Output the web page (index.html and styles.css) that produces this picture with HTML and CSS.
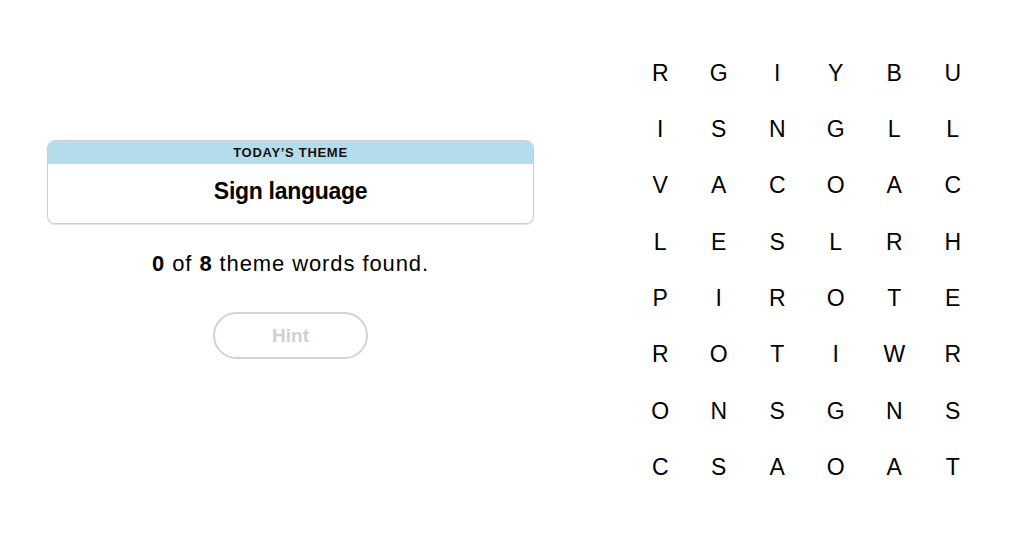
FILE: index.html
```html
<!DOCTYPE html>
<html lang="en">
<head>
<meta charset="utf-8">
<title>Strands</title>
<link rel="stylesheet" href="styles.css">
</head>
<body>
<main class="page">
  <section class="side">
    <div class="theme">
      <div class="theme-head">TODAY’S THEME</div>
      <div class="theme-body">Sign language</div>
    </div>
    <p class="found"><b>0</b> of <b>8</b> theme words found.</p>
    <button class="hint" disabled>Hint</button>
  </section>
  <section class="board">
    <span>R</span><span>G</span><span>I</span><span>Y</span><span>B</span><span>U</span>
    <span>I</span><span>S</span><span>N</span><span>G</span><span>L</span><span>L</span>
    <span>V</span><span>A</span><span>C</span><span>O</span><span>A</span><span>C</span>
    <span>L</span><span>E</span><span>S</span><span>L</span><span>R</span><span>H</span>
    <span>P</span><span>I</span><span>R</span><span>O</span><span>T</span><span>E</span>
    <span>R</span><span>O</span><span>T</span><span>I</span><span>W</span><span>R</span>
    <span>O</span><span>N</span><span>S</span><span>G</span><span>N</span><span>S</span>
    <span>C</span><span>S</span><span>A</span><span>O</span><span>A</span><span>T</span>
  </section>
</main>
</body>
</html>
```

FILE: styles.css
```css
* { box-sizing: border-box; }
html, body {
  margin: 0;
  background: #fff;
  color: #121212;
  font-family: "Liberation Sans", Arial, sans-serif;
}
.page {
  display: flex;
  align-items: flex-start;
  padding: 45px 0 0 47px;
  gap: 97px;
}
.side {
  width: 487px;
  margin-top: 95px;
  display: flex;
  flex-direction: column;
  align-items: center;
}
.theme {
  width: 100%;
  border: 1px solid #cdcdcd;
  border-radius: 8px;
  overflow: hidden;
  box-shadow: 0 1px 1px rgba(0, 0, 0, 0.12);
}
.theme-head {
  height: 23px;
  line-height: 24px;
  background: #b5dcea;
  text-align: center;
  font-weight: 700;
  font-size: 13px;
  letter-spacing: 0.7px;
}
.theme-body {
  height: 59px;
  line-height: 55px;
  text-align: center;
  font-weight: 700;
  font-size: 23px;
  letter-spacing: -0.3px;
  color: #000;
}
.found {
  margin: 26px 0 0;
  height: 28px;
  line-height: 28px;
  font-size: 22px;
  letter-spacing: 0.9px;
  color: #000;
}
.hint {
  margin-top: 34px;
  width: 155px;
  height: 47px;
  border: 2px solid #d3d3d3;
  border-radius: 24px;
  background: #fff;
  color: #cfcfcf;
  font-family: "Liberation Sans", Arial, sans-serif;
  font-weight: 700;
  font-size: 19px;
  padding: 0;
}
.board {
  display: grid;
  grid-template-columns: repeat(6, 58.5px);
  grid-auto-rows: 56.36px;
}
.board span {
  display: flex;
  align-items: center;
  justify-content: center;
  font-size: 23px;
  color: #000;
}
```
